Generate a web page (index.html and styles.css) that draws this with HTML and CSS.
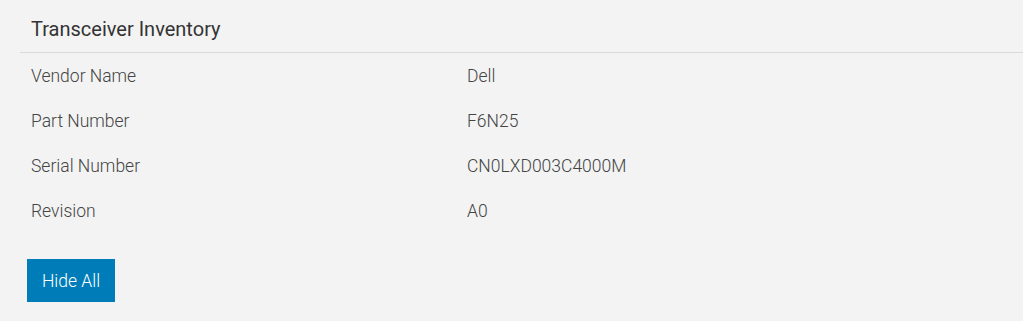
FILE: index.html
```html
<!DOCTYPE html>
<html>
<head>
<meta charset="utf-8">
<link rel="stylesheet" href="styles.css">
</head>
<body>
<section class="panel">
  <header class="panel-header">
    <h2 class="panel-title">Transceiver Inventory</h2>
  </header>
  <dl class="inv-list">
    <div class="inv-row"><dt>Vendor Name</dt><dd>Dell</dd></div>
    <div class="inv-row"><dt>Part Number</dt><dd>F6N25</dd></div>
    <div class="inv-row"><dt>Serial Number</dt><dd>CN0LXD003C4000M</dd></div>
    <div class="inv-row"><dt>Revision</dt><dd>A0</dd></div>
  </dl>
  <button class="btn-primary" type="button">Hide All</button>
</section>
</body>
</html>
```

FILE: styles.css
```css
html, body {
  margin: 0;
  padding: 0;
  background: #f3f3f3;
}
body {
  font-family: Roboto, "Liberation Sans", sans-serif;
  color: #444;
}
.panel {
  margin-left: 20px;
}
.panel-header {
  height: 53px;
  box-sizing: border-box;
  border-bottom: 1px solid #dadada;
  padding: 19px 11px 0;
}
.panel-title {
  margin: 0;
  font-size: 20px;
  font-weight: 400;
  color: #333;
  line-height: 20px;
}
.inv-list {
  margin: 0;
  padding: 0 0 0 11px;
}
.inv-row {
  display: grid;
  grid-template-columns: 436px 1fr;
  height: 45px;
  align-items: center;
}
.inv-row dt,
.inv-row dd {
  margin: 0;
  font-size: 17.5px;
  font-weight: 300;
  color: #444;
}
.btn-primary {
  display: block;
  margin: 26px 0 0 7px;
  width: 88px;
  height: 43px;
  border: 0;
  border-radius: 0;
  background: #007db8;
  color: #fff;
  font-family: Roboto, "Liberation Sans", sans-serif;
  font-size: 17.5px;
  font-weight: 300;
  padding: 0;
  cursor: pointer;
}
```
